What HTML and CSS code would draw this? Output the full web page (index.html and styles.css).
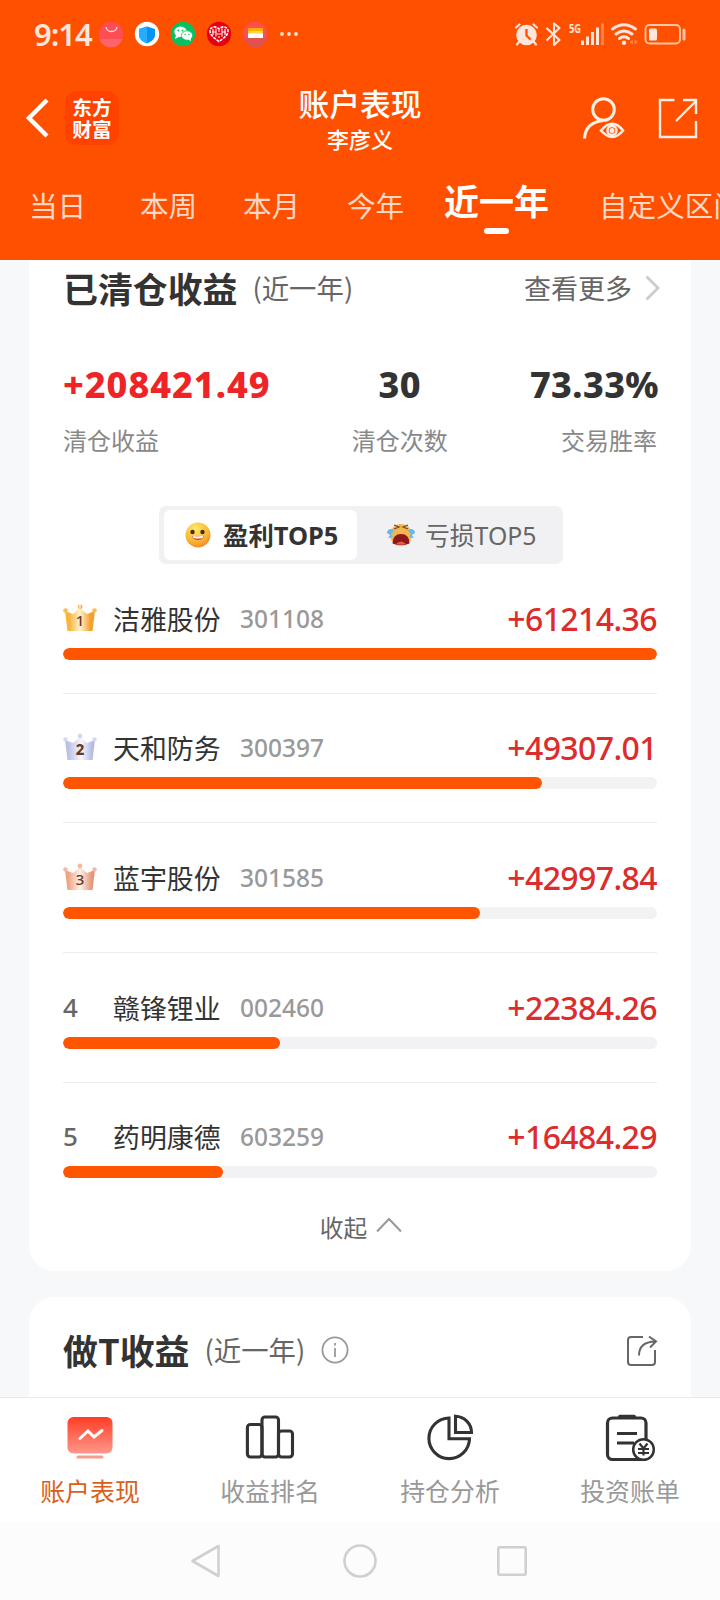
FILE: index.html
```html
<!DOCTYPE html>
<html lang="zh-CN">
<head>
<meta charset="utf-8">
<title>账户表现</title>
<link rel="stylesheet" href="styles.css">
</head>
<body>
<div class="screen">
  <header class="top">
    <div class="status">
      <span class="time">9:14</span>
      <svg class="notif" viewBox="99 20 202 28" width="202" height="28">
        <circle cx="111" cy="34" r="12.2" fill="#ff4d55"/><path d="M99.500 39h23a12 12 0 0 1-23 0z" fill="#ff6468"/><path d="M106 27c1 6 10 6 11 0" fill="none" stroke="#ffe4dc" stroke-width="1.300"/>
        <circle cx="147" cy="34" r="12.200" fill="#fff"/><path d="M147 26.500l8 2.500v6c0 4-4 7-8 8.500c-4-1.500-8-4.500-8-8.500v-6z" fill="#0a93f7"/><path d="M147 26.500v17c-4-1.500-8-4.500-8-8.500v-6z" fill="#25adff"/>
        <circle cx="183" cy="34" r="12.200" fill="#07c160"/><ellipse cx="180.500" cy="31.800" rx="6.200" ry="5.200" fill="#fff"/><path d="M176 35l-1 4 4-2z" fill="#fff"/><ellipse cx="187" cy="35.500" rx="5.600" ry="4.700" fill="#fff" stroke="#07c160" stroke-width=".8"/><path d="M188 39.500l3 1.500-.4-3z" fill="#fff"/><g fill="#07c160"><circle cx="178.400" cy="30.500" r=".9"/><circle cx="182.600" cy="30.500" r=".9"/><circle cx="185.200" cy="34.500" r=".7"/><circle cx="188.900" cy="34.500" r=".7"/></g>
        <circle cx="219" cy="34" r="12.200" fill="#e60012"/><path d="M219 41.500c-4-3-9-6-9-10.500c0-4.500 6-5.500 9-2c3-3.500 9-2.500 9 2c0 4.500-5 7.500-9 10.500z" fill="none" stroke="#fff" stroke-width="1.600" stroke-dasharray="3 1"/><path d="M213 29v6m3-6.500v8m6-8v8m3-7.500v6M212 32h4m6 0h4m-8-1h2m-3 3h4m-3 3h2" stroke="#fff" stroke-width="1.100"/>
        <circle cx="255" cy="34" r="12.200" fill="#ff4d50"/><path d="M243.500 38h23.500a12 12 0 0 1-23.500 0z" fill="#e4504c"/><path d="M248 28h15v4h-15z" fill="#ffb000"/><path d="M248 31h15v3h-15z" fill="#ffd34a"/><path d="M248 33.500h15v4.500h-15z" fill="#fff"/>
        <g fill="#ffe4d8"><circle cx="282" cy="34" r="1.900"/><circle cx="289" cy="34" r="1.900"/><circle cx="296" cy="34" r="1.900"/></g>
      </svg>
      <svg class="sys" viewBox="514 20 174 28" width="174" height="28" fill="none" stroke="#ffe6dc">
        <circle cx="526.500" cy="35" r="10.300" fill="#ffe6dc" stroke="none"/><path d="M516 27.500l3.500-3M537 27.500l-3.500-3M519 42l-2 2.500M534 42l2 2.500" stroke-width="2.200" stroke-linecap="round"/><path d="M526.500 29v6.500l4 4" stroke="#ff5000" stroke-width="2.300"/>
        <path d="M546.500 28l13 12-5.500 5V23.500l5.500 4.500-13 12.500" stroke-width="2.100" stroke-linejoin="round"/>
        <text x="569" y="32.500" class="g5" textLength="12" lengthAdjust="spacingAndGlyphs">5G</text>
        <path d="M582.500 40.500v4.500M587.500 36.500v8.500M592.500 32v13M597.500 27.500v17.500" stroke-width="3"/><path d="M602.500 23.500v21.500" stroke-width="2.800" opacity=".35"/>
        <path d="M612.500 29q11.500-8.500 23 0M616 34q8-6 16 0M619.500 38.500q4.500-3.500 9 0" stroke-width="2.900" stroke-linecap="round"/><circle cx="624" cy="42.800" r="2.200" fill="#ffe6dc" stroke="none"/><path d="M633 39.500v5l-3.500-2.500zM634.500 39.500v5l3.500-2.500z" fill="#ffe6dc" stroke="none" opacity=".35"/>
        <rect x="645.500" y="25" width="34.500" height="18.500" rx="4" stroke-width="1.900" stroke="#ffc3a6"/><rect x="649" y="28.500" width="8" height="12" rx="1.500" fill="#ffe6dc" stroke="none"/><path d="M684 30v9" stroke-width="3" stroke-linecap="round" stroke="#ffc3a6"/>
      </svg>
    </div>
    <div class="titlebar">
      <svg class="back" width="26" height="42" viewBox="0 0 26 42"><path d="M23 3L5 21l18 18" fill="none" stroke="#fff" stroke-width="4.400" /></svg>
      <div class="logo"><span>东方</span><span>财富</span></div>
      <div class="titles"><h1>账户表现</h1><p>李彦义</p></div>
      <svg class="acts" width="118" height="44" viewBox="581 95 118 44" fill="none" stroke="#fff0e6" stroke-width="3">
        <circle cx="603.500" cy="108.500" r="10.800"/><path d="M584.500 137.500q1-16 18.500-18" /><path d="M601 129.500q11.500-13.500 22 0q-10.500 13-22 0z" stroke-width="2.600"/><circle cx="612" cy="129.500" r="4.500" stroke-width="2.400"/><circle cx="612" cy="129.500" r="1" fill="#fff0e6"/>
        <path d="M674.500 99h-14.500v37h36v-16M683 99h13v14M676 120l20-20" stroke-width="2.400"/>
      </svg>
    </div>
    <nav class="tabs">
      <span class="t1">当日</span><span class="t2">本周</span><span class="t3">本月</span><span class="t4">今年</span><span class="on">近一年</span><span class="t6">自定义区间</span>
    </nav>
  </header>

  <main class="body">
    <section class="card first">
      <div class="head"><h2>已清仓收益</h2><span class="sub">(近一年)</span><span class="more">查看更多</span>
        <svg class="chev" width="16" height="28" viewBox="0 0 16 28"><path d="M1.500 2.500L13 14 1.500 25.500" fill="none" stroke="#ccc" stroke-width="2.800"/></svg></div>
      <div class="stats">
        <div class="stat l"><b class="red">+208421.49</b><span>清仓收益</span></div>
        <div class="stat c"><b>30</b><span>清仓次数</span></div>
        <div class="stat r"><b>73.33%</b><span>交易胜率</span></div>
      </div>
      <div class="switch">
        <div class="opt sel">
          <svg width="26" height="26" viewBox="0 0 26 26"><defs><radialGradient id="face" cx=".4" cy=".25" r=".8"><stop offset="0" stop-color="#ffe96a"/><stop offset=".6" stop-color="#fbb936"/><stop offset="1" stop-color="#f08528"/></radialGradient></defs><circle cx="13" cy="13" r="12.500" fill="url(#face)"/><circle cx="7.500" cy="10" r="2.200" fill="#4b2a14"/><circle cx="17.500" cy="10" r="2.200" fill="#4b2a14"/><path d="M7 14q6 1 12-.5q-1 4.500-6 4.500t-6-4z" fill="#d83a28"/><path d="M7.500 14q5.500 1 11-.5l-1 2.500q-4.500 1-9 0z" fill="#fff"/></svg>
          <span>盈利TOP5</span>
        </div>
        <div class="opt">
          <svg width="30" height="26" viewBox="0 0 30 26"><circle cx="15" cy="13" r="11" fill="#f3b653"/><path d="M8 3l5 2-5 2M22 3l-5 2 5 2" fill="none" stroke="#7a4524" stroke-width="1.200"/><path d="M6 7Q1 7 1 11l3 2 4-4zM24 7q5 0 5 4l-3 2-4-4zM5 12l-3 4 5-1zM25 12l3 4-5-1z" fill="#62b8ef"/><path d="M6.500 21.500q0-9.500 8.500-9.500t8.500 9.500q-8.500 3-17 0z" fill="#8e1719"/><path d="M10 22q5-5 10 0-5 1.500-10 0z" fill="#ec5550"/></svg>
          <span>亏损TOP5</span>
        </div>
      </div>
      <ul class="list">
        <li><div class="line"><svg class="crown" viewBox="0 0 34 28"><defs><linearGradient id="c1"><stop stop-color="#fbb43a"/><stop offset=".15" stop-color="#f9b43c"/><stop offset=".5" stop-color="#fff3cf"/><stop offset=".85" stop-color="#f5a02e"/></linearGradient></defs><g fill="url(#c1)"><path d="M2 7l8 3 7-6 7 6 8-3-2.500 20H4.500z"/><circle cx="17" cy="3" r="2.400"/></g><circle cx="2.500" cy="6.500" r="2.300" fill="#f8bc50"/><circle cx="31.500" cy="6.500" r="2.300" fill="#f8bc50"/><text x="17" y="22">1</text></svg><span class="name">洁雅股份</span><span class="code">301108</span><span class="amt">+61214.36</span></div><div class="bar"><i style="width:100%"></i></div></li>
        <li><div class="line"><svg class="crown" viewBox="0 0 34 28"><defs><linearGradient id="c2"><stop offset=".1" stop-color="#b9c0e4"/><stop offset=".55" stop-color="#f5f7ff"/><stop offset=".9" stop-color="#b6bbe5"/></linearGradient></defs><g fill="url(#c2)"><path d="M2 7l8 3 7-6 7 6 8-3-2.500 20H4.500z"/><circle cx="17" cy="3" r="2.400" fill="#d5d9f2"/></g><circle cx="2.500" cy="6.500" r="2.300" fill="#d5d9f2"/><circle cx="31.500" cy="6.500" r="2.300" fill="#d5d9f2"/><text x="17" y="22" class="heavy">2</text></svg><span class="name">天和防务</span><span class="code">300397</span><span class="amt">+49307.01</span></div><div class="bar"><i style="width:80.6%"></i></div></li>
        <li><div class="line"><svg class="crown" viewBox="0 0 34 28"><defs><linearGradient id="c3"><stop offset=".1" stop-color="#efa284"/><stop offset=".5" stop-color="#fff1e9"/><stop offset=".9" stop-color="#e59478"/></linearGradient></defs><g fill="url(#c3)"><path d="M2 7l8 3 7-6 7 6 8-3-2.500 20H4.500z"/><circle cx="17" cy="3" r="2.400" fill="#f3b9a2"/></g><circle cx="2.500" cy="6.500" r="2.300" fill="#f3b9a2"/><circle cx="31.500" cy="6.500" r="2.300" fill="#f3b9a2"/><text x="17" y="22">3</text></svg><span class="name">蓝宇股份</span><span class="code">301585</span><span class="amt">+42997.84</span></div><div class="bar"><i style="width:70.2%"></i></div></li>
        <li><div class="line"><span class="num">4</span><span class="name">赣锋锂业</span><span class="code">002460</span><span class="amt">+22384.26</span></div><div class="bar"><i style="width:36.5%"></i></div></li>
        <li><div class="line"><span class="num">5</span><span class="name">药明康德</span><span class="code">603259</span><span class="amt">+16484.29</span></div><div class="bar"><i style="width:26.9%"></i></div></li>
      </ul>
      <div class="fold"><span>收起</span><svg width="26" height="16" viewBox="0 0 26 16"><path d="M1 14.500L13 2l12 12.500" fill="none" stroke="#999" stroke-width="2"/></svg></div>
    </section>
    <section class="card second">
      <div class="head"><h2>做T收益</h2><span class="sub">(近一年)</span>
        <svg class="info" width="28" height="28" viewBox="0 0 28 28" fill="none" stroke="#999" stroke-width="1.800"><circle cx="14" cy="14" r="12.600"/><path d="M14 12v9M14 7v2.500"/></svg>
        <svg class="share" width="32" height="32" viewBox="0 0 32 32" fill="none" stroke="#666" stroke-width="2"><path d="M17 2H5q-3 0-3 3v22q0 3 3 3h21q3 0 3-3V15"/><path d="M13 20.500Q13 7 29 6.500M23 1.500l7 5-6 6"/></svg>
      </div>
    </section>
  </main>

  <nav class="dock">
    <div class="item cur"><svg width="54" height="50" viewBox="0 0 54 50"><defs><linearGradient id="mon" x2="0" y2="1"><stop stop-color="#ff3d25"/><stop offset="1" stop-color="#ff988b"/></linearGradient></defs><rect x="4.500" y="4" width="45" height="36.500" rx="6" fill="url(#mon)"/><path d="M17 25.500l8-7.500 6 6 8-6.500" fill="none" stroke="#fff" stroke-width="3" stroke-linecap="round"/><path d="M15 44h24" stroke="#f59c8e" stroke-width="3" stroke-linecap="round"/></svg><span>账户表现</span></div>
    <div class="item"><svg width="54" height="50" viewBox="0 0 54 50" fill="none" stroke="#333" stroke-width="3.100"><rect x="4.400" y="11.500" width="14.600" height="32.500" rx="3"/><rect x="19" y="4" width="16.500" height="40" rx="3"/><rect x="35.500" y="18" width="14" height="26" rx="3"/></svg><span>收益排名</span></div>
    <div class="item"><svg width="54" height="50" viewBox="0 0 54 50" fill="none" stroke="#333" stroke-width="3.100"><path d="M26 5a20.300 20.300 0 1 0 20.500 20.800H26z"/><path d="M32.500 3.200v16.300H48.500A16.500 16.500 0 0 0 32.500 3.200z"/></svg><span>持仓分析</span></div>
    <div class="item"><svg width="54" height="50" viewBox="0 0 54 50" fill="none" stroke="#333" stroke-width="3.200"><rect x="4.500" y="5" width="38.500" height="41.500" rx="5"/><path d="M17 3.800h14" stroke-width="4" stroke-linecap="round"/><path d="M14 20.500h20M14 30h17"/><circle cx="40.500" cy="36.500" r="10.300" fill="#fff" stroke-width="2.500"/><path d="M36.500 30.500l4 5 4-5M40.500 35.500v7M35 36h11M35 40h11" stroke-width="2.200"/></svg><span>投资账单</span></div>
  </nav>
  <div class="sysnav">
    <svg width="720" height="78" viewBox="0 1522 720 78" fill="none" stroke="#d0d0d0" stroke-width="2.600" stroke-linejoin="round"><path d="M192.500 1561l26-15v30z"/><circle cx="360" cy="1561" r="15.500"/><rect x="498.300" y="1547.300" width="27.400" height="27.400" rx="1"/></svg>
  </div>
</div>
</body>
</html>
```

FILE: styles.css
```css
* { box-sizing: border-box; margin: 0; padding: 0; }
body { font-family: "Noto Sans", "Noto Sans CJK SC", sans-serif; color: #333; }
.screen { width: 720px; height: 1600px; display: flex; flex-direction: column; overflow: hidden; background: #f7f8fa; }
h1, h2, p { font-family: "Noto Sans CJK SC", sans-serif; }
svg { display: block; flex: none; }

.top { height: 260px; flex: none; background: #ff5000; color: #fff; overflow: hidden; }
.status { height: 68px; display: flex; align-items: center; padding: 0 32px 0 34px; }
.time { width: 65px; font-size: 31px; font-weight: 600; color: #ffe6dc; line-height: 40px; letter-spacing: -1px; white-space: nowrap; }
.sys { margin-left: auto; }
.g5 { font: 700 12px "Noto Sans", sans-serif; fill: #ffe6dc; stroke: none; }
.titlebar { height: 100px; display: grid; grid-template-columns: 26px 54px 1fr 118px; padding: 0 21px 0 24px; align-items: center; column-gap: 15px; }
.logo { width: 54px; height: 54px; border-radius: 12px; background: #ff4200; display: flex; flex-direction: column; justify-content: center; align-items: center; font: 700 19.700px/22px "Noto Sans CJK SC", sans-serif; margin-top: -1px; }
.titles { text-align: center; padding-left: 20px; }
.titles h1 { font-size: 30.800px; font-weight: 500; line-height: 40px; margin-top: -1px; }
.titles p { font-size: 22px; font-weight: 500; line-height: 30px; }
.acts { align-self: center; }
.tabs { height: 92px; display: flex; font-family: "Noto Sans CJK SC", sans-serif; font-size: 28.600px; line-height: 40px; color: #ffd9c5; white-space: nowrap; padding: 17px 0 0 29px; }
.t1, .t2, .t3, .t4, .t6 { flex: none; }
.t1 { width: 111px; }
.t2 { width: 103px; }
.t3 { width: 104px; }
.t4 { width: 97px; }
.tabs .on { width: 155px; flex: none; color: #fff; font-size: 35px; font-weight: 700; margin-top: -5px; }
.on::after { content: ""; display: block; width: 25px; height: 6px; border-radius: 3px; background: #fff; margin: 8px 0 0 40px; }

.body { height: 1137px; flex: none; overflow: hidden; padding: 0 29px; }
.card { background: #fff; padding: 0 34px; }
.first { height: 1011px; border-radius: 0 0 26px 26px; }
.head { display: flex; align-items: center; height: 58px; padding-bottom: 3px; font-family: "Noto Sans CJK SC", sans-serif; white-space: nowrap; }
.head h2 { font-size: 34.900px; font-weight: 700; line-height: 50px; }
.sub { font-size: 27.400px; color: #666; margin: -1px 0 0 15px; }
.more { font-size: 27px; color: #666; margin: 0 13px 0 auto; }
.chev { margin-right: -4px; }
.stats { display: grid; grid-template-columns: 1fr 1fr 1fr; height: 188px; padding-top: 41px; }
.stat { display: flex; flex-direction: column; }
.stat b { font-size: 36px; font-weight: 800; line-height: 52px; letter-spacing: .4px; }
.stat span { font: 24px/36px "Noto Sans CJK SC", sans-serif; color: #888; margin-top: 11px; }
.stat .red { color: #ee2426; letter-spacing: 1px; }
.c { align-items: center; padding-left: 65px; }
.r { align-items: flex-end; }
.r b { margin-right: -2px; }
.switch { width: 404px; height: 58px; margin: 0 0 0 96px; background: #f1f1f4; border-radius: 7px; padding: 4px 5px; display: flex; }
.opt { flex: 1; display: flex; align-items: center; font-size: 24.800px; color: #666; line-height: 40px; gap: 9px; padding-left: 29px; white-space: nowrap; }
.opt.sel { flex: none; width: 193px; background: #fff; border-radius: 6px; color: #333; font-weight: 700; gap: 12px; padding-left: 21px; font-size: 25.400px; }
.list { list-style: none; margin-top: 1px; }
.list li { height: 129px; padding-top: 31px; border-bottom: 1px solid #ececec; }
.list li:nth-child(3), .list li:nth-child(4) { height: 130px; padding-top: 32px; }
.list li:last-child { border: 0; }
.line { display: flex; align-items: center; height: 44px; white-space: nowrap; }
.crown { width: 34px; height: 28px; }
.crown text { font: 500 15px "Noto Sans", sans-serif; text-anchor: middle; fill: #6b3527; }
.crown .heavy { font-weight: 800; }
.num { width: 34px; font-size: 26px; font-weight: 500; color: #666; }
.name { width: 127px; font-size: 26.900px; margin-left: 16px; }
.code { font-size: 24.500px; font-weight: 500; color: #999; }
.amt { margin-left: auto; font-size: 32px; font-weight: 500; color: #dc2c2c; letter-spacing: -.6px; }
.bar { height: 12px; margin-top: 8px; border-radius: 6px; background: #f2f2f4; overflow: hidden; }
.bar i { display: block; height: 100%; border-radius: 6px; background: #ff5500; }
.fold { display: flex; justify-content: center; align-items: center; gap: 9px; height: 40px; margin: -5px 0 0 2px; font-size: 23.700px; color: #666; }
.fold svg { margin-top: -5px; }
.second { margin-top: 26px; height: 200px; border-radius: 26px 26px 0 0; padding-top: 25px; }
.info { margin: 1px 0 0 16px; }
.share { margin: 2px -1px 0 auto; }

.dock { height: 125px; flex: none; background: #fff; border-top: 1px solid #e8eaee; display: grid; grid-template-columns: repeat(4, 1fr); }
.item { display: flex; flex-direction: column; align-items: center; padding-top: 15px; font: 24.900px/36px "Noto Sans CJK SC", sans-serif; color: #999; }
.item span { margin-top: 9px; }
.cur { color: #d9601c; }
.sysnav { height: 78px; flex: none; background: #fcfcfc; }
```
